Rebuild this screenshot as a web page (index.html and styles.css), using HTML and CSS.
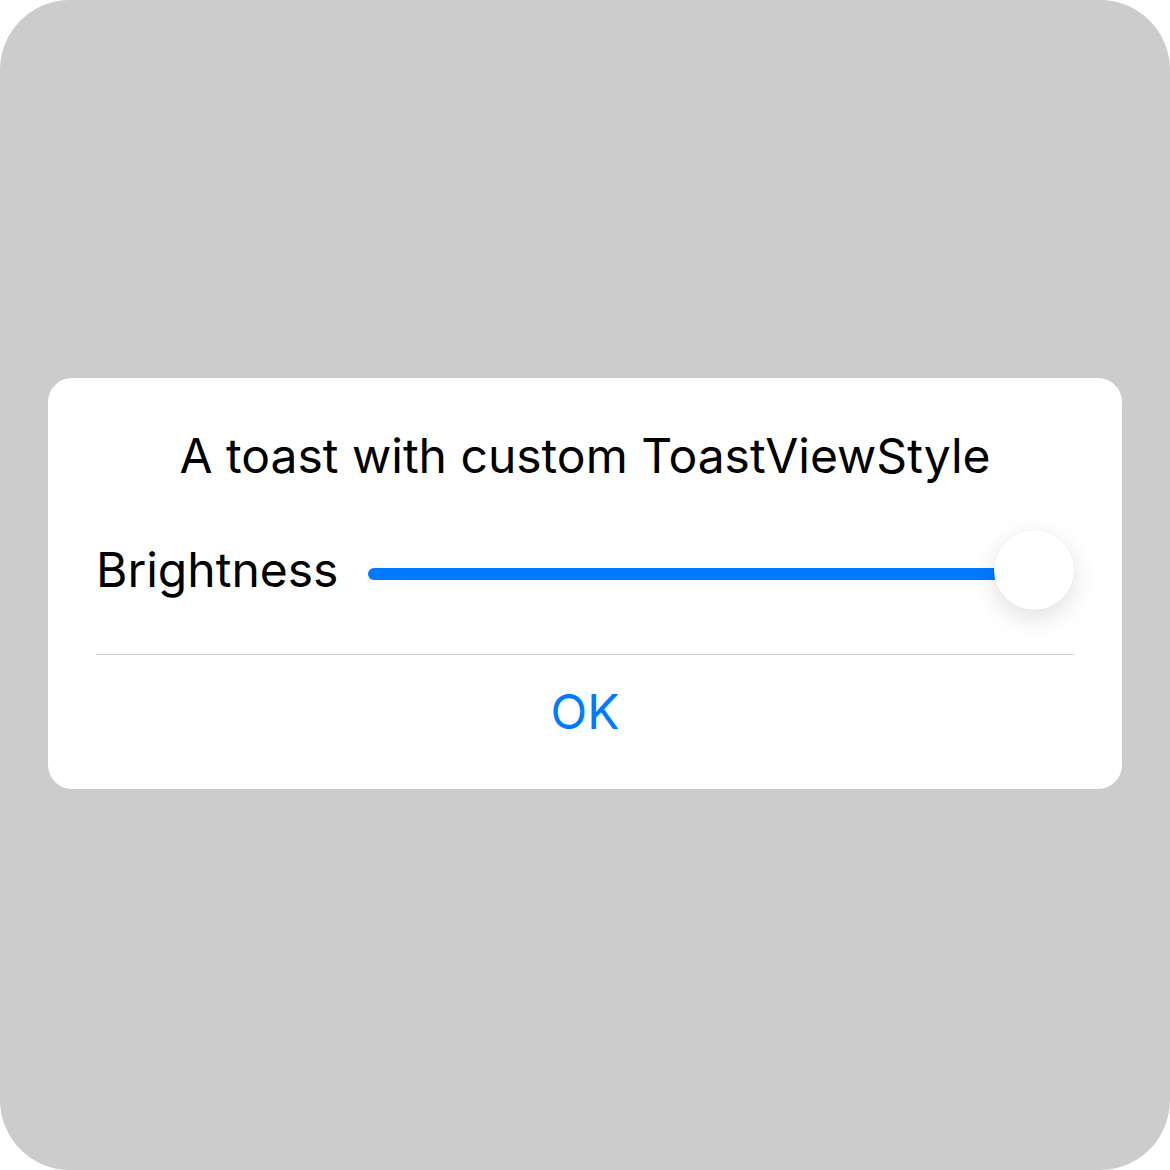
FILE: index.html
```html
<!DOCTYPE html>
<html>
<head>
<meta charset="utf-8">
<link rel="stylesheet" href="styles.css">
</head>
<body>
<div class="screen">
  <div class="toast">
    <div class="title">A toast with custom ToastViewStyle</div>
    <div class="row">
      <div class="label">Brightness</div>
      <div class="slider">
        <div class="track"></div>
        <div class="knob"></div>
      </div>
    </div>
    <div class="divider"></div>
    <div class="action">OK</div>
  </div>
</div>
</body>
</html>
```
FILE: styles.css
```css
html, body {
  margin: 0;
  padding: 0;
  background: #ffffff;
}
body {
  font-family: Inter, "Noto Sans", "Liberation Sans", sans-serif;
  color: #000;
}
.screen {
  width: 1170px;
  height: 1170px;
  background: #cccccc;
  border-radius: 70px;
  display: flex;
  justify-content: center;
  align-items: flex-start;
  box-sizing: border-box;
  padding-top: 378px;
}
.toast {
  width: 1074px;
  background: #ffffff;
  border-radius: 24px;
  padding: 50px 48px 0;
  box-sizing: border-box;
  display: flex;
  flex-direction: column;
}
.title {
  font-size: 48px;
  line-height: 56px;
  text-align: center;
}
.row {
  margin-top: 46px;
  height: 80px;
  display: flex;
  align-items: center;
}
.label {
  font-size: 48px;
  line-height: 56px;
}
.slider {
  flex: 1;
  margin-left: 30px;
  height: 80px;
  display: flex;
  align-items: center;
}
.track {
  flex: 1;
  height: 12px;
  margin-top: 8px;
  margin-right: -6px;
  border-radius: 6px;
  background: #007aff;
}
.knob {
  width: 80px;
  height: 80px;
  border-radius: 50%;
  background: #ffffff;
  box-shadow: 0 8px 26px rgba(0, 0, 0, 0.12), 0 0 1px rgba(0, 0, 0, 0.10);
  position: relative;
}
.divider {
  margin-top: 44px;
  height: 1px;
  background: #cfcfcf;
}
.action {
  padding: 29px 0 49px;
  font-size: 48px;
  line-height: 56px;
  text-align: center;
  color: #007aff;
}
```
